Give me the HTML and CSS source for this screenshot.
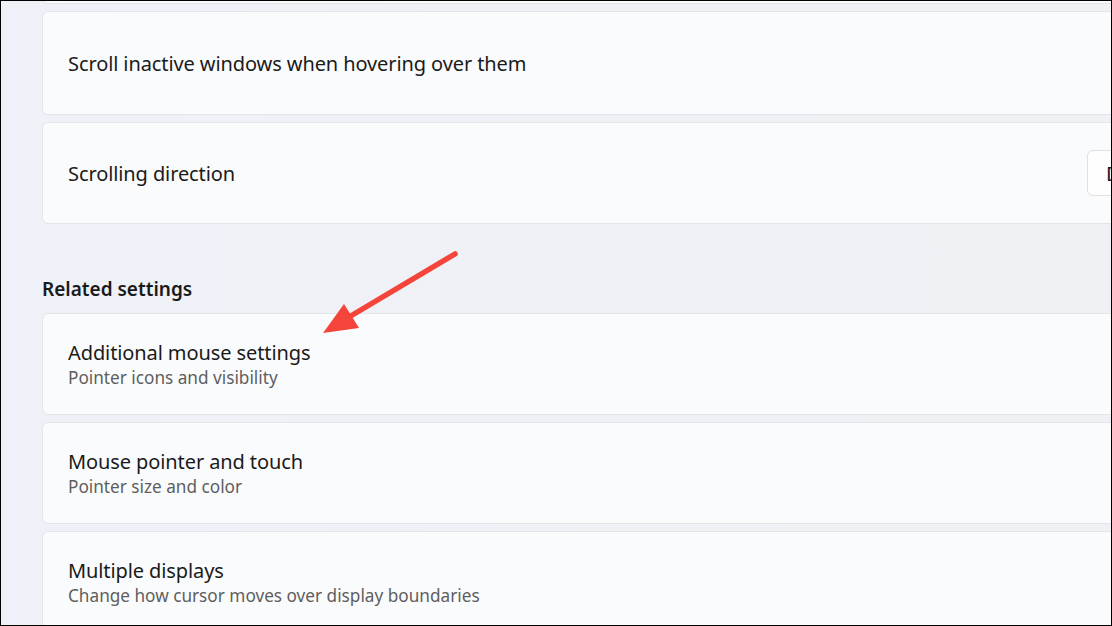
FILE: index.html
```html
<!DOCTYPE html>
<html lang="en">
<head>
<meta charset="utf-8">
<title>Mouse settings</title>
<link rel="stylesheet" href="styles.css">
</head>
<body>
<div class="frame">
  <div class="content">
    <div class="card card-partial"></div>
    <div class="card card-first">
      <div class="text"><div class="title">Scroll inactive windows when hovering over them</div></div>
    </div>
    <div class="card">
      <div class="text"><div class="title">Scrolling direction</div></div>
      <div class="dropdown">Down motion scrolls down</div>
    </div>

    <h2 class="section">Related settings</h2>

    <div class="card">
      <div class="text">
        <div class="title">Additional mouse settings</div>
        <div class="sub">Pointer icons and visibility</div>
      </div>
    </div>
    <div class="card">
      <div class="text">
        <div class="title">Mouse pointer and touch</div>
        <div class="sub">Pointer size and color</div>
      </div>
    </div>
    <div class="card">
      <div class="text">
        <div class="title">Multiple displays</div>
        <div class="sub">Change how cursor moves over display boundaries</div>
      </div>
    </div>
  </div>

  <svg class="arrow" width="1112" height="626" viewBox="0 0 1112 626">
    <line x1="455" y1="254" x2="349" y2="317" stroke="#f5443a" stroke-width="5.5" stroke-linecap="round"/>
    <polygon points="323,333 344,304 359,328" fill="#f5443a"/>
  </svg>
</div>
</body>
</html>
```

FILE: styles.css
```css
* { box-sizing: border-box; }

html, body {
  margin: 0;
  padding: 0;
}

body {
  width: 1112px;
  height: 626px;
  overflow: hidden;
  background: #000;
  font-family: "Noto Sans", "Open Sans", sans-serif;
  color: #1b1b1b;
}

.frame {
  position: relative;
  width: 1112px;
  height: 626px;
  border: 1px solid #000;
  background: linear-gradient(90deg, #eef2f8 0%, #eff1f6 40%, #f0f1f5 100%);
  overflow: hidden;
}

.content {
  display: flex;
  flex-direction: column;
  gap: 7px;
  width: 1221px;
  margin-left: 41px;
  margin-top: -58px;
}

.card {
  display: flex;
  align-items: center;
  height: 102px;
  padding: 0 25px;
  background: #fafbfc;
  border: 1px solid #e3e5e9;
  border-radius: 6px;
  flex-shrink: 0;
}

.card-partial { height: 61px; }
.card-first { height: 104px; }

.text {
  flex: 1;
  display: flex;
  flex-direction: column;
}

.title {
  font-size: 20px;
  line-height: 27px;
  color: #1a1a1a;
  letter-spacing: -0.1px;
}

.sub {
  font-size: 17.2px;
  line-height: 24px;
  color: #5e5e5e;
}

.dropdown {
  width: 150px;
  height: 46px;
  padding-left: 18px;
  display: flex;
  align-items: center;
  white-space: nowrap;
  overflow: hidden;
  background: #fefefe;
  border: 1px solid #e0e0e2;
  border-radius: 6px;
  font-size: 20px;
  color: #1a1a1a;
}

.section {
  margin: 45px 0 4px 0;
  font-size: 19px;
  line-height: 26px;
  font-weight: 600;
  color: #1a1a1a;
}

.arrow {
  position: absolute;
  left: -1px;
  top: -1px;
  pointer-events: none;
}
```
